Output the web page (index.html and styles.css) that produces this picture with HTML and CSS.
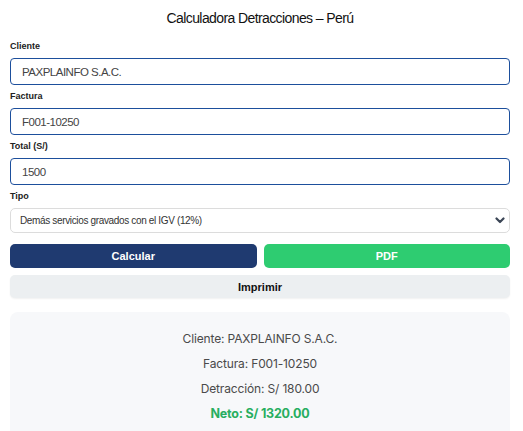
FILE: index.html
```html
<!DOCTYPE html>
<html lang="es">
<head>
	<meta charset="UTF-8">
	<meta name="viewport" content="width=device-width, initial-scale=1.0">
	<link rel="stylesheet" href="styles.css">
	<title>Calculadora Detracciones – Perú</title>
</head>
<body>
	<main class="app">
		<h1 class="title">Calculadora Detracciones – Perú</h1>
		<form class="form">
			<label class="field">
				<span class="field-label">Cliente</span>
				<input class="input input-active" type="text" value="PAXPLAINFO S.A.C.">
			</label>
			<label class="field">
				<span class="field-label">Factura</span>
				<input class="input input-active" type="text" value="F001-10250">
			</label>
			<label class="field">
				<span class="field-label">Total (S/)</span>
				<input class="input input-active" type="text" value="1500">
			</label>
			<label class="field">
				<span class="field-label">Tipo</span>
				<span class="select-wrap">
					<select class="select">
						<option selected>Demás servicios gravados con el IGV (12%)</option>
					</select>
					<svg class="chevron" width="10" height="7" viewBox="0 0 10 7" aria-hidden="true">
						<path d="M1.5 1.5 L5 5 L8.5 1.5" fill="none" stroke="#3b4656" stroke-width="2.2" stroke-linecap="round" stroke-linejoin="round"/>
					</svg>
				</span>
			</label>
			<div class="actions">
				<button type="button" class="btn btn-primary">Calcular</button>
				<button type="button" class="btn btn-success">PDF</button>
			</div>
			<button type="button" class="btn btn-light">Imprimir</button>
		</form>
		<section class="result">
			<p>Cliente: PAXPLAINFO S.A.C.</p>
			<p>Factura: F001-10250</p>
			<p>Detracción: S/ 180.00</p>
			<p class="neto">Neto: S/ 1320.00</p>
		</section>
	</main>
</body>
</html>
```

FILE: styles.css
```css
* {
	box-sizing: border-box;
}

:root {
	--fg: #111;
	--blue: #1d4f9c;
	--navy: #1f3a70;
	--green: #2ecc71;
	--green-dark: #27ae60;
	--light: #eceff1;
	--panel: #f7f8fa;
}

body {
	margin: 0;
	background: #fff;
	color: var(--fg);
	font-family: "Liberation Sans", Arial, sans-serif;
}

.app {
	max-width: 520px;
	padding: 0 10px;
}

.title {
	margin: 0;
	padding: 9px 0 0;
	font-size: 14px;
	letter-spacing: -0.6px;
	font-weight: normal;
	text-align: center;
	line-height: 18px;
}

.form {
	margin-top: 14px;
}

.field {
	display: block;
	margin-bottom: 6px;
}

.field-label {
	display: block;
	font-size: 9px;
	font-weight: bold;
	line-height: 11px;
	margin-bottom: 6px;
	color: #222;
}

.input {
	display: block;
	width: 100%;
	height: 27px;
	padding: 0 11px;
	font: inherit;
	font-size: 11.5px;
	letter-spacing: -0.5px;
	color: #444;
	background: #fff;
	border: 1px solid #ddd;
	border-radius: 4px;
	outline: none;
}
.input-active {
	border: 1.5px solid var(--blue);
}

.select-wrap {
	position: relative;
	display: block;
}
.select {
	display: block;
	width: 100%;
	height: 25px;
	padding: 0 9px;
	font: inherit;
	font-size: 10px;
	letter-spacing: -0.35px;
	color: #333;
	background: #fff;
	border: 1px solid #dcdcdc;
	border-radius: 5px;
	-webkit-appearance: none;
	appearance: none;
}
.chevron {
	position: absolute;
	right: 5px;
	top: 9px;
}

.actions {
	display: grid;
	grid-template-columns: 1fr 1fr;
	gap: 7px;
	margin-top: 11px;
}

.btn {
	display: block;
	width: 100%;
	height: 24px;
	font: inherit;
	font-size: 11px;
	font-weight: bold;
	border: none;
	border-radius: 5px;
	cursor: pointer;
}
.btn-primary {
	background: var(--navy);
	color: #fff;
}
.btn-success {
	background: var(--green);
	color: #fff;
}
.btn-light {
	margin-top: 7px;
	height: 23px;
	background: var(--light);
	color: #111;
	box-shadow: 0 1px 2px rgba(0, 0, 0, 0.06);
}

.result {
	margin-top: 14px;
	padding: 14px 10px 30px;
	background: var(--panel);
	border-radius: 8px;
	text-align: center;
	font-family: Inter, "Noto Sans", sans-serif;
	font-size: 12px;
	letter-spacing: -0.15px;
	color: #4a4a4a;
}
.result p {
	margin: 0;
	line-height: 25px;
}
.result .neto {
	color: var(--green-dark);
	font-size: 12.5px;
	letter-spacing: -0.2px;
	font-weight: bold;
}
```
